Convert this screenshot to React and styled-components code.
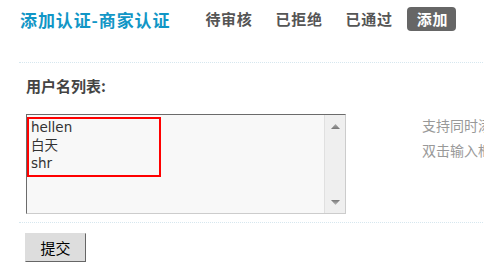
import React from "react";
import styled, { createGlobalStyle } from "styled-components";

const GlobalStyle = createGlobalStyle`
  html, body {
    margin: 0;
    padding: 0;
    background: #ffffff;
    overflow: hidden;
  }
  body {
    font-family: "Noto Sans CJK SC", "Liberation Sans", sans-serif;
  }
`;

const Page = styled.div`
  width: 760px;
  margin-left: 19px;
`;

const Header = styled.div`
  display: flex;
  align-items: flex-start;
  height: 55px;
  padding-top: 7px;
  border-bottom: 1px dotted #d6e7ef;
`;

const HeaderRow = styled.div`
  display: flex;
  align-items: center;
  height: 24px;
`;

const Title = styled.div`
  padding-left: 1px;
  font-size: 17px;
  font-weight: bold;
  color: #1196c6;
  letter-spacing: 0.9px;
  margin-right: 35px;
`;

const Tab = styled.div`
  font-size: 15px;
  font-weight: bold;
  letter-spacing: 0.7px;
  color: #555555;
  height: 24px;
  line-height: 24px;
  margin-right: ${(p) => p.$gap}px;
`;

const ActiveTab = styled.div`
  font-size: 15px;
  font-weight: bold;
  letter-spacing: 0.7px;
  color: #ffffff;
  background: #666666;
  border-radius: 4px;
  height: 24px;
  line-height: 24px;
  padding: 0 8px 0 10px;
`;

const Section = styled.div`
  padding: 13px 0 8px 7px;
  border-bottom: 1px dotted #d6e7ef;
`;

const Label = styled.div`
  font-size: 15px;
  font-weight: bold;
  color: #444444;
  line-height: 20px;
  margin-bottom: 18px;
`;

const Field = styled.div`
  display: flex;
  align-items: flex-start;
`;

const ListBox = styled.div`
  position: relative;
  display: flex;
  width: 318px;
  height: 98px;
  background: #f8f8f8;
  border: 1px solid #cccccc;
  border-top-color: #6b6b6b;
  border-left-color: #6b6b6b;
`;

const Lines = styled.div`
  flex: 1;
  padding: 3px 0 0 4px;
  font-family: "DejaVu Sans", "Noto Sans CJK SC", sans-serif;
  font-size: 13.5px;
  line-height: 18px;
  color: #333333;
`;

const Line = styled.div`
  white-space: nowrap;
`;

const Marker = styled.div`
  position: absolute;
  left: 0;
  top: 2px;
  width: 130px;
  height: 56px;
  border: 2px solid #ff0000;
`;

const ScrollTrack = styled.div`
  width: 20px;
  border-left: 1px solid #e0e0e0;
  background: #efefef;
  display: flex;
  flex-direction: column;
  justify-content: space-between;
  align-items: center;
  padding: 9px 0 8px;
`;

const Hint = styled.div`
  margin-left: 76px;
  margin-top: -1px;
  font-size: 14px;
  line-height: 25px;
  color: #999999;
  white-space: nowrap;
`;

const Footer = styled.div`
  padding: 10px 0 0 6px;
`;

const Submit = styled.button`
  width: 61px;
  height: 29px;
  padding: 0;
  background: #dddddd;
  border: 1px solid #dddddd;
  border-right-color: #666666;
  border-bottom-color: #666666;
  font-family: "Noto Sans CJK SC", sans-serif;
  font-size: 15px;
  color: #000000;
`;

const Arrow = ({ down }) => (
  <svg width="9" height="5" viewBox="0 0 9 5">
    <defs>
      <linearGradient id={down ? "gd" : "gu"} x1="0" y1="0" x2="0" y2="1">
        <stop offset="0" stopColor={down ? "#777" : "#aaa"} />
        <stop offset="1" stopColor={down ? "#bbb" : "#777"} />
      </linearGradient>
    </defs>
    <polygon
      points={down ? "0,0 9,0 4.5,5" : "4.5,0 9,5 0,5"}
      fill={`url(#${down ? "gd" : "gu"})`}
    />
  </svg>
);

const tabs = [
  { label: "待审核", gap: 23 },
  { label: "已拒绝", gap: 23 },
  { label: "已通过", gap: 14 },
];

const App = () => {
  const names = ["hellen", "白天", "shr"];
  return (
    <Page>
      <GlobalStyle />
      <Header>
        <HeaderRow>
          <Title>添加认证-商家认证</Title>
          {tabs.map((t) => (
            <Tab key={t.label} $gap={t.gap}>
              {t.label}
            </Tab>
          ))}
          <ActiveTab>添加</ActiveTab>
        </HeaderRow>
      </Header>
      <Section>
        <Label>用户名列表:</Label>
        <Field>
          <ListBox>
            <Lines>
              {names.map((n) => (
                <Line key={n}>{n}</Line>
              ))}
            </Lines>
            <ScrollTrack>
              <Arrow />
              <Arrow down />
            </ScrollTrack>
            <Marker />
          </ListBox>
          <Hint>
            <div>支持同时添加多个用户名，每行一个</div>
            <div>双击输入框可清空内容</div>
          </Hint>
        </Field>
      </Section>
      <Footer>
        <Submit>提交</Submit>
      </Footer>
    </Page>
  );
};

export default App;
